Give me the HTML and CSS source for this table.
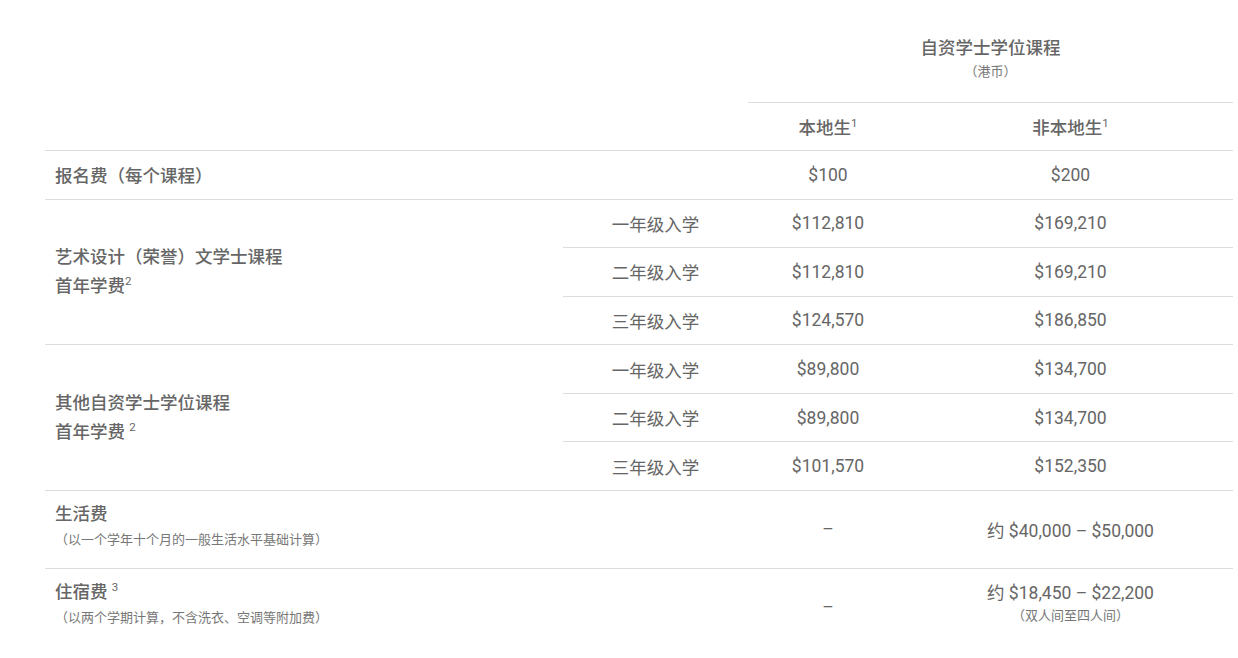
FILE: index.html
```html
<!DOCTYPE html>
<html lang="zh-CN">
<head>
<meta charset="utf-8">
<title>自资学士学位课程费用</title>
<link rel="stylesheet" href="styles.css">
</head>
<body>
<div class="page">
  <table class="fees">
    <colgroup>
      <col class="c-name">
      <col class="c-year">
      <col class="c-local">
      <col class="c-non">
    </colgroup>
    <thead>
      <tr class="r-head1">
        <th></th>
        <th></th>
        <th class="prog" colspan="2">
          <div class="prog-title">自资学士学位课程</div>
          <div class="note">（港币）</div>
        </th>
      </tr>
      <tr class="r-head2">
        <th class="line"></th>
        <th class="line"></th>
        <th class="line val-head">本地生<sup>1</sup></th>
        <th class="line val-head">非本地生<sup>1</sup></th>
      </tr>
    </thead>
    <tbody>
      <tr class="r-std line-row">
        <td class="name">报名费（每个课程）</td>
        <td></td>
        <td class="val">$100</td>
        <td class="val">$200</td>
      </tr>
      <tr class="r-std">
        <td class="name group" rowspan="3">
          <div>艺术设计（荣誉）文学士课程</div>
          <div>首年学费<sup>2</sup></div>
        </td>
        <td class="year sub">一年级入学</td>
        <td class="val sub">$112,810</td>
        <td class="val sub">$169,210</td>
      </tr>
      <tr class="r-std">
        <td class="year sub">二年级入学</td>
        <td class="val sub">$112,810</td>
        <td class="val sub">$169,210</td>
      </tr>
      <tr class="r-std line-row">
        <td class="year">三年级入学</td>
        <td class="val">$124,570</td>
        <td class="val">$186,850</td>
      </tr>
      <tr class="r-std">
        <td class="name group" rowspan="3">
          <div>其他自资学士学位课程</div>
          <div>首年学费 <sup>2</sup></div>
        </td>
        <td class="year sub">一年级入学</td>
        <td class="val sub">$89,800</td>
        <td class="val sub">$134,700</td>
      </tr>
      <tr class="r-std">
        <td class="year sub">二年级入学</td>
        <td class="val sub">$89,800</td>
        <td class="val sub">$134,700</td>
      </tr>
      <tr class="r-std line-row">
        <td class="year">三年级入学</td>
        <td class="val">$101,570</td>
        <td class="val">$152,350</td>
      </tr>
      <tr class="r-tall line-row">
        <td class="name top">
          <div>生活费</div>
          <div class="note left">（以一个学年十个月的一般生活水平基础计算）</div>
        </td>
        <td></td>
        <td class="val">–</td>
        <td class="val">约 $40,000 – $50,000</td>
      </tr>
      <tr class="r-tall">
        <td class="name top">
          <div>住宿费 <sup>3</sup></div>
          <div class="note left">（以两个学期计算，不含洗衣、空调等附加费）</div>
        </td>
        <td></td>
        <td class="val">–</td>
        <td class="val stack">
          <div class="stack-main">约 $18,450 – $22,200</div>
          <div class="note">（双人间至四人间）</div>
        </td>
      </tr>
    </tbody>
  </table>
</div>
</body>
</html>
```

FILE: styles.css
```css
html, body {
  margin: 0;
  padding: 0;
  background: #fff;
}

body {
  font-family: Roboto, "Noto Sans CJK SC", sans-serif;
  color: #666;
  font-size: 17.5px;
  text-spacing-trim: space-all;
}

.page {
  padding: 0 5px 0 45px;
}

.fees {
  width: 1188px;
  border-collapse: collapse;
  table-layout: fixed;
}

.c-name { width: 518px; }
.c-year { width: 185px; }
.c-local { width: 160px; }
.c-non { width: 325px; }

.fees th,
.fees td {
  padding: 0;
  font-weight: normal;
}

.r-head1 th {
  height: 81px;
  padding-bottom: 21px;
  vertical-align: bottom;
}

.prog {
  border-bottom: 1px solid #dcdcdc;
  text-align: center;
}

.prog-title {
  font-weight: 500;
  line-height: 24px;
}

.note {
  font-size: 13px;
  line-height: 18px;
  color: #777;
  margin-top: 3px;
}

.r-head2 th {
  height: 47px;
  border-bottom: 1px solid #dcdcdc;
}

.val-head {
  font-weight: 500 !important;
  text-align: center;
  vertical-align: middle;
}

sup {
  font-size: 11.5px;
  line-height: 0;
  vertical-align: 7px;
  font-weight: normal;
}

.r-std td {
  height: 47.57px;
}

.line-row td {
  border-bottom: 1px solid #dcdcdc;
}

.sub {
  border-bottom: 1px solid #dcdcdc;
}

.name {
  padding-left: 10px !important;
  font-weight: 500 !important;
  vertical-align: middle;
  text-align: left;
}

.group {
  border-bottom: 1px solid #dcdcdc;
  line-height: 29px;
}

.year {
  text-align: center;
  vertical-align: middle;
}

.val {
  text-align: center;
  vertical-align: middle;
}

.r-tall td {
  height: 77px;
}

.r-tall td.name.top {
  height: 67px;
  vertical-align: top;
  padding-top: 10px;
  line-height: 26px;
}

.note.left {
  margin-top: 2px;
  line-height: 22px;
  font-weight: normal;
  text-align: left;
}

.r-tall td.stack {
  height: 71px;
  padding-bottom: 6px;
}

.stack-main {
  line-height: 24px;
}

.stack .note {
  margin-top: 0;
  line-height: 22px;
}
```
